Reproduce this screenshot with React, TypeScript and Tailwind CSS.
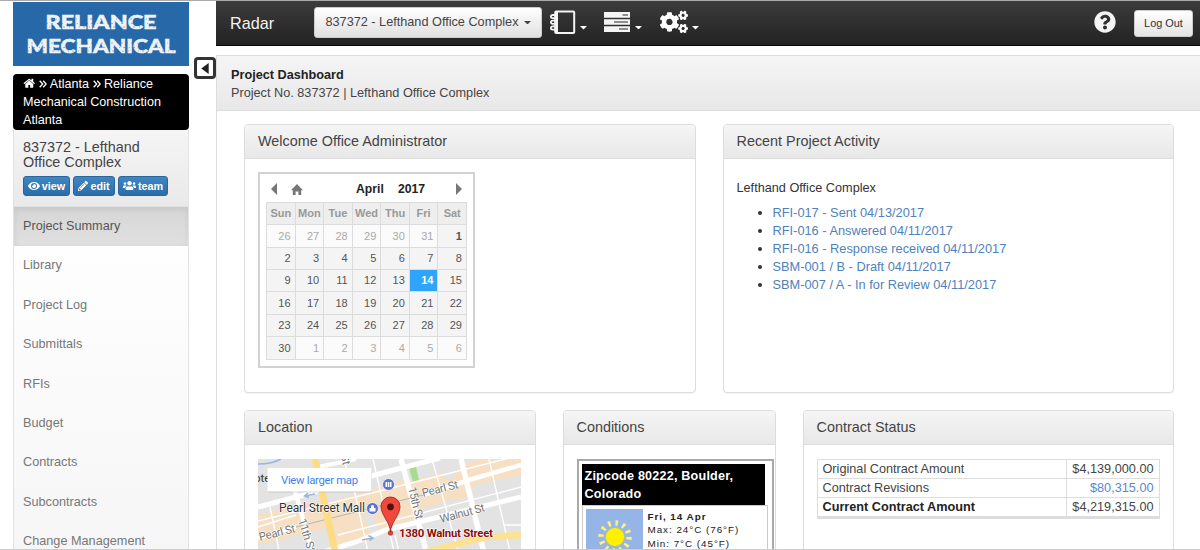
import type { ReactNode } from "react";
import { clsx } from "clsx";
import { FaCogs, FaEye, FaPencilAlt, FaQuestionCircle, FaUsers } from "react-icons/fa";

const NAV = [
  "Project Summary",
  "Library",
  "Project Log",
  "Submittals",
  "RFIs",
  "Budget",
  "Contracts",
  "Subcontracts",
  "Change Management",
];

const ACTIVITY = [
  "RFI-017 - Sent 04/13/2017",
  "RFI-016 - Answered 04/11/2017",
  "RFI-016 - Response received 04/11/2017",
  "SBM-001 / B - Draft 04/11/2017",
  "SBM-007 / A - In for Review 04/11/2017",
];

const DAYS = ["Sun", "Mon", "Tue", "Wed", "Thu", "Fri", "Sat"];
// April 2017 starts on a Saturday, so the grid opens with six days of March
const CELLS = Array.from({ length: 42 }, (_, i) => {
  if (i < 6) return { day: 26 + i, out: true };
  if (i > 35) return { day: i - 35, out: true };
  return { day: i - 5, out: false };
});

function HomeIcon({ className }: { className?: string }) {
  return (
    <svg viewBox="0 0 1792 1792" fill="currentColor" className={className}>
      <path d="M1472 992v480q0 26-19 45t-45 19h-384v-384h-256v384h-384q-26 0-45-19t-19-45v-480q0-1 .5-3t.5-3l575-474 575 474q1 2 1 6zm223-69l-62 74q-8 9-21 11h-3q-13 0-21-7l-692-577-692 577q-12 8-24 7-13-2-21-11l-62-74q-8-10-7-23.5t11-21.5l719-599q32-26 76-26t76 26l244 204v-195q0-14 9-23t23-9h192q14 0 23 9t9 23v408l219 182q10 8 11 21.5t-7 23.5z" />
    </svg>
  );
}

function Chevrons() {
  return (
    <svg viewBox="0 0 8 8" fill="none" stroke="currentColor" strokeWidth="1.3" className="mb-px inline-block h-2 w-2">
      <path d="M0.7 0.8L3.7 4L0.7 7.2M4.2 0.8L7.2 4L4.2 7.2" />
    </svg>
  );
}

function Caret({ className }: { className?: string }) {
  return (
    <svg viewBox="0 0 8 4" fill="currentColor" className={clsx("h-[3.5px] w-[7px]", className)}>
      <path d="M0 0H8L4 4Z" />
    </svg>
  );
}

function Logo() {
  return (
    <svg viewBox="0 0 176 64" className="block h-16 w-[176px] shrink-0 bg-[#2668a8]">
      <g
        fill="#eef2f6"
        stroke="#eef2f6"
        strokeWidth="0.6"
        fontFamily="Lato, sans-serif"
        fontWeight="900"
        fontSize="19.5"
      >
        <text x="32.5" y="27" textLength="111" lengthAdjust="spacingAndGlyphs">RELIANCE</text>
        <text x="13.5" y="50.5" textLength="149" lengthAdjust="spacingAndGlyphs">MECHANICAL</text>
      </g>
      {/* chalk wear over the letters */}
      <g stroke="#2668a8" strokeWidth="0.7" strokeDasharray="1 3 2 4" opacity="0.6">
        <path d="M33 17H145M34 21.5H145M36 25H145M14 41H163M16 45.5H163M15 49H163" />
      </g>
    </svg>
  );
}

function SmallButton({ icon, label, className }: { icon: ReactNode; label: string; className: string }) {
  return (
    <button
      className={clsx(
        "flex h-5 items-center justify-center gap-[2px] rounded-[3px] border border-[#2b669a] bg-linear-to-b from-[#3f86c4] to-[#2a6da8] text-[10.8px] font-bold text-white",
        className,
      )}
    >
      {icon}
      {label}
    </button>
  );
}

function Sidebar() {
  return (
    <aside className="flex w-[176px] shrink-0 flex-col pt-px">
      <Logo />
      <div className="mt-2 h-[56px] shrink-0 rounded-[4px] bg-black pl-[10px] pt-[2px] text-[12.6px] leading-[17.8px] text-white">
        <HomeIcon className="mb-[2px] inline-block h-[12.5px] w-[12.5px]" /> <Chevrons /> Atlanta <Chevrons /> Reliance
        <br />
        Mechanical Construction
        <br />
        Atlanta
      </div>
      <div className="h-[76.500px] shrink-0 border-x border-b border-[#e2e2e2] bg-linear-to-b from-[#f5f5f5] to-[#e9e9e9] pl-[9px] pt-[10px]">
        <h4 className="text-[14.4px] leading-[15.2px] text-[#444]">
          837372 - Lefthand
          <br />
          Office Complex
        </h4>
        <div className="mt-[5.500px] flex gap-[3px]">
          <SmallButton className="w-[47px]" icon={<FaEye size={12} />} label="view" />
          <SmallButton className="w-[42px]" icon={<FaPencilAlt size={10} />} label="edit" />
          <SmallButton className="w-[50px]" icon={<FaUsers size={13} />} label="team" />
        </div>
      </div>
      <nav className="min-h-0 flex-1 border-x border-[#e2e2e2] bg-linear-to-b from-white to-[#f6f6f6] text-[12.7px] text-[#777]">
        {NAV.map((item, i) => (
          <div
            key={item}
            className={clsx(
              "flex h-[39.35px] items-center pl-[9px] pt-px",
              i === 0 && "bg-linear-to-b from-[#d6d6d6] to-[#e0e0e0] text-[#555] shadow-[inset_0_2px_6px_rgba(0,0,0,0.08)]",
            )}
          >
            {item}
          </div>
        ))}
      </nav>
    </aside>
  );
}

function NotebookIcon() {
  return (
    <svg viewBox="0 0 27 25" className="h-[25px] w-[27px]" fill="none" stroke="#f4f4f4">
      <rect x="6.2" y="1.5" width="19" height="21.5" rx="1" strokeWidth="2" />
      <path d="M7.5 1.5V23" strokeWidth="3" />
      <path d="M7 5H3.5a1.6 1.6 0 0 0 0 3.2H7M7 10.7H3.5a1.6 1.6 0 0 0 0 3.2H7M7 16.4H3.5a1.6 1.6 0 0 0 0 3.2H7" strokeWidth="1.8" />
    </svg>
  );
}

function ServerIcon() {
  return (
    <svg viewBox="0 0 26 20" className="h-5 w-[26px]">
      <path fill="#f4f4f4" d="M0 0h26v5.7H0zM0 7.2h26v5.6H0zM0 14.3h26v5.7H0z" />
      <path stroke="#2b2b2b" strokeWidth="1.2" d="M18.5 3H24M10 10H24M15 17H24" />
    </svg>
  );
}

function Navbar() {
  return (
    <div className="flex h-[45px] shrink-0 bg-linear-to-b from-[#3c3c3c] to-[#222] text-white shadow-[inset_0_-1px_0_#080808]">
      <span className="w-[98px] pl-[14px] pt-[10px] text-[16.2px] leading-6 text-[#f4f4f4]">Radar</span>
      <button className="mt-[6px] flex h-[31px] w-[228px] items-center justify-center gap-[5px] rounded-[3px] border border-[#ccc] bg-linear-to-b from-white to-[#e0e0e0] text-[12.7px] text-[#444]">
        837372 - Lefthand Office Complex
        <Caret />
      </button>
      <div className="flex flex-1 items-start">
        <div className="ml-[7px] mt-[9px] flex">
          <NotebookIcon />
          <Caret className="ml-1 mt-4" />
        </div>
        <div className="ml-[17px] mt-[10.5px] flex">
          <ServerIcon />
          <Caret className="ml-[5px] mt-[14px]" />
        </div>
        <div className="ml-[18px] mt-[7px] flex">
          <FaCogs size={28} />
          <Caret className="ml-[4px] mt-[18px]" />
        </div>
      </div>
      <FaQuestionCircle size={22} className="mr-[18px] mt-[10px] text-[#f4f4f4]" />
      <button className="mr-[7px] mt-[9px] h-[27px] w-[59px] rounded-[3px] border border-[#ccc] bg-linear-to-b from-white to-[#e4e4e4] text-[10.9px] text-[#333]">
        Log Out
      </button>
    </div>
  );
}

function Panel({ title, className, children }: { title: string; className: string; children: ReactNode }) {
  return (
    <section className={clsx("shrink-0 rounded-[4px] border border-[#ddd] bg-white shadow-[0_1px_1px_rgba(0,0,0,0.05)]", className)}>
      <h3 className="flex h-[34px] items-center rounded-t-[3px] border-b border-[#ddd] bg-linear-to-b from-[#f5f5f5] to-[#e8e8e8] pl-[13px] pt-px text-[14.4px] text-[#444]">
        {title}
      </h3>
      <div className="px-[13px] pt-[14px]">{children}</div>
    </section>
  );
}

function Calendar() {
  return (
    <div className="-mt-px h-[196px] w-[217px] border-2 border-[#d2d2d2] bg-white px-[6px]">
      <div className="flex h-[28px] items-center pt-[2px] text-[12.2px] font-bold text-[#222]">
        <svg viewBox="0 0 6 12" className="ml-[5px] h-3 w-[6px] fill-[#777]">
          <path d="M6 0V12L0 6Z" />
        </svg>
        <svg viewBox="0 0 12 11" className="ml-[14px] h-[11px] w-3 fill-[#777]">
          <path d="M6 0L12 6.2H10.2V11H7.4V7.5H4.6V11H1.8V6.2H0Z" />
        </svg>
        <span className="ml-[53px] w-[42px]">April</span>
        <span>2017</span>
        <svg viewBox="0 0 6 12" className="ml-auto mr-[5px] h-3 w-[6px] fill-[#777]">
          <path d="M0 0V12L6 6Z" />
        </svg>
      </div>
      <div className="grid h-[157.5px] w-[201px] grid-cols-7 grid-rows-7 border-l border-t border-[#dcdcdc] text-[11px]">
        {DAYS.map((d) => (
          <div key={d} className="flex items-center justify-center border-b border-r border-[#dcdcdc] bg-[#eee] font-bold text-[#999]">
            {d}
          </div>
        ))}
        {CELLS.map((c, i) => {
          const today = c.day === 14 && !c.out;
          return (
            <div
              key={i}
              className={clsx(
                "flex items-center justify-end border-b border-r border-[#dcdcdc] pr-[4px]",
                today && "bg-[#2fa4fb] font-bold text-white",
                c.out && "bg-[#fbfbfb] text-[#aaa]",
                !c.out && !today && "bg-[#f4f4f4] text-[#555]",
                i === 6 && "font-bold",
              )}
            >
              {c.day}
            </div>
          );
        })}
      </div>
    </div>
  );
}

function LocationMap() {
  return (
    <svg viewBox="0 0 263 106" className="block h-[106px] w-[263px]" fontFamily="Roboto, sans-serif">
      <rect width="263" height="106" fill="#e3e3e3" />
      <g fill="#f6dfc2">
        <path d="M0 56L36 46L66 42L72 68L10 84L0 84Z" />
        <path d="M72 43L140 22L152 18L158 40L72 66Z" />
        <path d="M152 22L186 14L190 24L204 5L263 -8V16L218 26L206 40L192 41L158 52Z" />
        <path d="M76 62L106 56L114 82L78 90Z" />
        <path d="M112 52L156 42L160 60L120 70Z" />
      </g>
      <path d="M151 9L158 8L161 21L155 22.5Z" fill="#a5dc90" />
      <path d="M0 5Q14 5 23 0" fill="none" stroke="#8fb6ee" strokeWidth="1.5" />
      <g fill="none" stroke="#fff" strokeWidth="1.4">
        <path d="M0 62L130 30L263 -4M80 76L263 28M0 68L38 56M115 0L139 106M95 26L113 106M174 0L204 106M231 0L255 106M12 48L24 106M137 76L144 106M86 0L92 22M246 66H263" />
      </g>
      <g fill="none" stroke="#fff">
        <path d="M0 48L38 38L128 13L182 -1" strokeWidth="5" />
        <path d="M0 79L38 68" strokeWidth="4" />
        <path d="M165 36L211 21L263 6" strokeWidth="4.5" />
        <path d="M36 102L98 83L128 71L263 38" strokeWidth="5" />
        <path d="M32 14L58 106" strokeWidth="4.5" />
        <path d="M143 0L172 106" strokeWidth="5.5" />
        <path d="M203 0L229 106" strokeWidth="5.5" />
        <path d="M60 8L98 0" strokeWidth="4" />
      </g>
      <path d="M38 68L165 36" stroke="#aaa" strokeWidth="0.8" />
      <path d="M57 0L80 106" stroke="#fddc84" strokeWidth="7" />
      <path d="M160 95L228 78L263 76" fill="none" stroke="#fde293" strokeWidth="6.5" />
      <path d="M57 35L47 37M50 34L46.5 37L51 38.5M104 81L114 79M110.5 76.5L115 79L111.5 81.5" fill="none" stroke="#9db2dc" strokeWidth="1.5" />

      <g fontSize="11.5" fill="#777" stroke="#fff" strokeWidth="1.2" paintOrder="stroke">
        <text transform="translate(2 82) rotate(-14)" textLength="37">Pearl St</text>
        <text transform="translate(165 38) rotate(-14)" textLength="37">Pearl St</text>
        <text transform="translate(183 64) rotate(-15)" textLength="46">Walnut St</text>
        <text transform="translate(150 29) rotate(76)" textLength="33">15th St</text>
        <text transform="translate(40 61) rotate(73)" textLength="34">11th St</text>
        <text transform="translate(83 -4) rotate(80)">St</text>
      </g>
      <text x="-4" y="23" fontSize="11.5" fill="#333">ote</text>
      <text x="21" y="53" fontSize="12" fill="#333" stroke="#fff" strokeWidth="1.2" paintOrder="stroke" textLength="86">
        Pearl Street Mall
      </text>

      <g fill="#5c74d6" stroke="#fff" strokeWidth="0.8">
        <circle cx="114.5" cy="49.5" r="6" />
        <circle cx="130.5" cy="25.5" r="6" />
      </g>
      <path d="M111.5 49H117.5V52.5H111.5ZM113 49V47.5a1.5 1.5 0 0 1 3 0V49M127.5 23H133.5V28H127.5Z" fill="#fff" />
      <path d="M129.5 23V28M131.5 23V28" stroke="#5c74d6" strokeWidth="0.7" />

      <circle cx="132.5" cy="74" r="2.3" fill="#ea4335" stroke="#8e1b12" strokeWidth="0.6" />
      <path
        d="M132.5 73C132 63 123 56 123 47.5a9.5 9.5 0 0 1 19 0C142 56 133 63 132.5 73Z"
        fill="#f0483e"
        stroke="#a52714"
        strokeWidth="0.9"
      />
      <circle cx="132.5" cy="48" r="3.4" fill="#52130e" />
      <text x="141" y="78" fontSize="11.5" fontWeight="700" fill="#8c0e08" stroke="#fff" strokeWidth="1.2" paintOrder="stroke" textLength="94">
        1380 Walnut Street
      </text>

      <rect x="10" y="10.5" width="104" height="23" rx="1" fill="#999" opacity="0.35" />
      <rect x="9.5" y="9" width="104" height="23.5" rx="1" fill="#fff" />
      <text x="23" y="24.5" fontSize="11.3" fill="#427fed" textLength="77">View larger map</text>
    </svg>
  );
}

function SunIcon() {
  return (
    <svg viewBox="0 0 57 60" className="h-[60px] w-[57px] shrink-0 bg-[#95b5e6]">
      <circle cx="29" cy="28" r="14" fill="none" stroke="#fff07a" strokeWidth="5.5" strokeDasharray="2.6 4.73" />
      <circle cx="29" cy="28" r="10" fill="#b9c48c" />
      <circle cx="29" cy="28" r="9" fill="#fff000" />
    </svg>
  );
}

function Weather() {
  return (
    <div className="h-[110px] w-[197px] border-2 border-[#a9a9a9] p-[3px]">
      <div className="h-[41px] w-[183px] bg-black pl-[3px] pt-[3px] text-[12.6px] font-bold leading-[18px] tracking-[0.2px] text-white">
        Zipcode 80222, Boulder,
        <br />
        Colorado
      </div>
      <div className="flex h-[80px] w-[186px] border border-[#ccc] p-[3px]">
        <SunIcon />
        <div className="pl-[5px] pt-px text-[9.9px] leading-[13.4px] tracking-[0.95px] text-[#222]">
          <b>Fri, 14 Apr</b>
          <br />
          Max: 24°C (76°F)
          <br />
          Min: 7°C (45°F)
        </div>
      </div>
    </div>
  );
}

function ContractTable() {
  return (
    <table className="w-[343px] border-collapse border border-b-[3px] border-[#ddd] text-[12.7px] leading-[18px] text-[#444]">
      <tbody>
        <tr>
          <td className="border border-[#ddd] px-[5px]">Original Contract Amount</td>
          <td className="w-[92px] border border-[#ddd] px-[5px] text-right">$4,139,000.00</td>
        </tr>
        <tr>
          <td className="border border-[#ddd] px-[5px]">Contract Revisions</td>
          <td className="border border-[#ddd] px-[5px] text-right text-[#5a87cf]">$80,315.00</td>
        </tr>
        <tr>
          <td className="border border-b-[3px] border-[#ddd] px-[5px] font-bold text-[#222]">Current Contract Amount</td>
          <td className="border border-b-[3px] border-[#ddd] px-[5px] text-right">$4,219,315.00</td>
        </tr>
      </tbody>
    </table>
  );
}

export default function App() {
  return (
    <div className="flex h-[550px] w-[1200px] overflow-hidden border-y border-t-[#aaa] border-b-[#ccc] bg-white pl-[13px] font-['Liberation_Sans',Arial,sans-serif]">
      <Sidebar />
      <div className="w-[27px] shrink-0 pl-[5px] pt-14">
        <div className="flex h-[22px] w-[22px] items-center justify-center rounded-[4px] border-[3px] border-[#333] bg-white">
          <svg viewBox="0 0 8 12" className="h-[11px] w-2 fill-[#222]">
            <path d="M8 0V12L0 6Z" />
          </svg>
        </div>
      </div>
      <main className="flex min-w-0 flex-1 flex-col">
        <Navbar />
        <div className="mt-[9px] min-h-0 flex-1 border-l border-t border-[#ddd]">
          <header className="h-[55px] border-b border-[#ddd] bg-linear-to-b from-[#f5f5f5] to-[#e8e8e8] pl-[14px] pt-[10px] text-[12.7px] leading-[18px] text-[#444]">
            <b className="text-[12.7px] text-[#222]">Project Dashboard</b>
            <br />
            Project No. 837372 | Lefthand Office Complex
          </header>
          <div className="pl-[27px] pt-[13px]">
            <div className="flex gap-[27px]">
              <Panel title="Welcome Office Administrator" className="h-[269px] w-[451.5px]">
                <Calendar />
              </Panel>
              <Panel title="Recent Project Activity" className="h-[269px] w-[451.5px]">
                <p className="mt-[6px] text-[12.7px] leading-[18px] text-[#333]">Lefthand Office Complex</p>
                <ul className="mt-[7px] list-disc pl-9 text-[12.8px] leading-[18px] text-[#333]">
                  {ACTIVITY.map((a) => (
                    <li key={a}>
                      <a className="text-[#4f81bd]">{a}</a>
                    </li>
                  ))}
                </ul>
              </Panel>
            </div>
            <div className="mt-[17px] flex gap-[27px]">
              <Panel title="Location" className="h-[200px] w-[291.5px]">
                <LocationMap />
              </Panel>
              <Panel title="Conditions" className="h-[200px] w-[213px]">
                <Weather />
              </Panel>
              <Panel title="Contract Status" className="h-[200px] w-[371.5px]">
                <ContractTable />
              </Panel>
            </div>
          </div>
        </div>
      </main>
    </div>
  );
}
